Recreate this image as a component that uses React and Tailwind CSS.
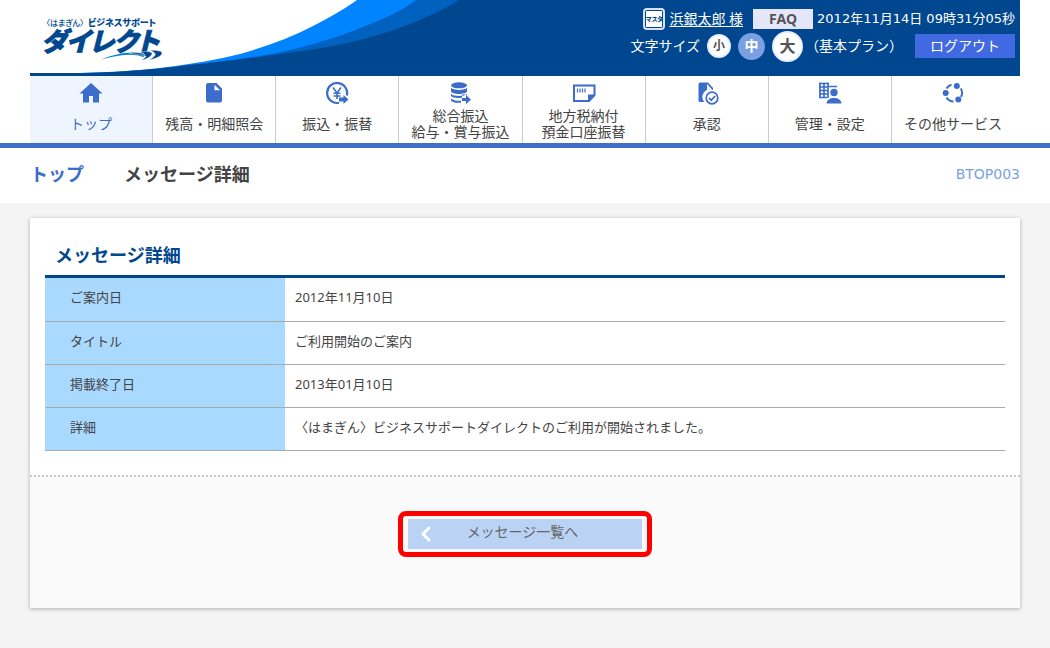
import { ChevronLeft } from 'lucide-react';

const SANS = 'font-["Noto_Sans","Noto_Sans_CJK_JP",sans-serif]';
const TIGHT = 'font-["Liberation_Sans","Noto_Sans_CJK_JP",sans-serif]';

function HomeIcon() {
  return (
    <svg viewBox="0 0 24 24" className="h-6 w-6" fill="currentColor" aria-hidden="true">
      <path d="M12 2 0.5 12.5H4V21.5h6v-6.5h4v6.5h6v-9h3.5z" />
    </svg>
  );
}

function FileIcon() {
  return (
    <svg viewBox="0 0 24 24" className="h-6 w-6" fill="currentColor" aria-hidden="true">
      <path d="M6 2h8.5L20 7.5V19.5a2 2 0 0 1-2 2H6a2 2 0 0 1-2-2V4a2 2 0 0 1 2-2zm6.500 1.700V9.200H18z" />
    </svg>
  );
}

function YenIcon() {
  return (
    <svg viewBox="0 0 24 24" className="h-6 w-6" fill="none" stroke="currentColor" aria-hidden="true">
      <path d="M21.800 14.500A10 10 0 1 0 14 21.800" strokeWidth="2.200" />
      <path d="M8 6.500l4 5.500 4-5.500M12 12v6M8.500 12.200h7M8.500 15h7" strokeWidth="1.600" />
      <path d="M14 16.500h4.500v-2.500l5 4.500-5 4.500v-2.500H14z" fill="currentColor" stroke="none" />
    </svg>
  );
}

function CoinsIcon() {
  return (
    <svg viewBox="0 0 24 24" className="h-6 w-6" fill="currentColor" aria-hidden="true">
      <ellipse cx="11" cy="4.300" rx="8" ry="3" />
      <path d="M3 6.800c2 2.800 14 2.800 16 0v3.700c-1 3.300-15 3.300-16 0z" />
      <path d="M3 12.700c2 3 14 3 16 0v1.200l-1-.4h-4v3.200c-4 .6-10.500 0-11-2z" />
      <path d="M3 17.500c2 2 6 2.500 10 2.200v2c-5 .6-9.500-.5-10-2.400z" />
      <path d="M14 17h4v-3l5 4.700-5 4.300v-3h-4z" />
    </svg>
  );
}

function SlipIcon() {
  return (
    <svg viewBox="0 0 24 24" className="h-6 w-6" fill="none" stroke="currentColor" aria-hidden="true">
      <path d="M2 4.500h20.500V14l-5.500 6H2z" strokeWidth="2" />
      <path d="M23 13.500h-7V20.500z" fill="currentColor" stroke="none" />
      <path d="M5.500 7.500v4M8 7.500v4M10.500 7.500v4M13 7.500v4" strokeWidth="1.200" />
    </svg>
  );
}

function ApproveIcon() {
  return (
    <svg viewBox="0 0 24 24" className="h-6 w-6" fill="none" stroke="currentColor" aria-hidden="true">
      <path d="M5.500 1.500H13l5 5.500V9a7.500 7.500 0 0 0-8.500 12H5a1.500 1.500 0 0 1-1.500-1.500V3a1.500 1.500 0 0 1 1.500-1.500zm6.500 1.500v5.500h5z" fill="currentColor" stroke="none" />
      <circle cx="17" cy="17" r="5.800" strokeWidth="1.700" />
      <path d="M14 17l2.200 2.200 4-4.200" strokeWidth="1.700" />
    </svg>
  );
}

function OfficeIcon() {
  return (
    <svg viewBox="0 0 24 24" className="h-6 w-6" fill="none" stroke="currentColor" aria-hidden="true">
      <path d="M2 1.500v15.500M6 1.500v15.500M10 1.500v15.500M1 2.500h10M1 6h9M1 9.500h9M1 13h9M1 16.500h8M11 5.500h8" strokeWidth="1.700" />
      <circle cx="16" cy="11.500" r="3.700" fill="currentColor" stroke="none" />
      <path d="M8.500 22.500c0-7.500 15-7.500 15 0z" fill="currentColor" stroke="none" />
    </svg>
  );
}

function ServicesIcon() {
  return (
    <svg viewBox="0 0 24 24" className="h-6 w-6" fill="none" stroke="currentColor" aria-hidden="true">
      <path d="M5.500 7.500a8.500 8.500 0 0 1 5-3.800M19.800 7.500a8.500 8.500 0 0 1 .2 8.500M12.500 20.500a8.500 8.500 0 0 1-7-4" strokeWidth="2" />
      <g fill="currentColor" stroke="none">
        <circle cx="4.700" cy="12" r="3" />
        <circle cx="15.800" cy="5" r="3" />
        <circle cx="17.300" cy="18.500" r="3" />
      </g>
    </svg>
  );
}

const NAV_ITEMS = [
  { lines: ['トップ'], Icon: HomeIcon, active: true },
  { lines: ['残高・明細照会'], Icon: FileIcon },
  { lines: ['振込・振替'], Icon: YenIcon },
  { lines: ['総合振込', '給与・賞与振込'], Icon: CoinsIcon },
  { lines: ['地方税納付', '預金口座振替'], Icon: SlipIcon },
  { lines: ['承認'], Icon: ApproveIcon },
  { lines: ['管理・設定'], Icon: OfficeIcon },
  { lines: ['その他サービス'], Icon: ServicesIcon },
];

const DETAILS = [
  ['ご案内日', '2012年11月10日'],
  ['タイトル', 'ご利用開始のご案内'],
  ['掲載終了日', '2013年01月10日'],
  ['詳細', '〈はまぎん〉ビジネスサポートダイレクトのご利用が開始されました。'],
];

function HeaderWave() {
  return (
    <svg viewBox="0 0 440 76" className="absolute left-0 top-0 h-[76px] w-[440px]" aria-hidden="true">
      <path d="M0 0H440V73H0z" fill="#fff" />
      <path d="M0 73H50C110 72 165 65 210 54 235 47 260 38 283 26 300 17 315 9 327 0H440V76H0z" fill="#0084ff" />
      <path d="M150 66C190 62 220 58 247 53 290 44 320 33 357 17 370 11 380 5 386 0H440V76H150z" fill="#0061bf" />
      <path d="M0 73H50C100 72 125 69 160 65 200 61 220 58 243 55 295 49 340 40 383 23 405 13 417 8 429 0H440V76H0z" fill="#00478f" />
    </svg>
  );
}

function Logo() {
  return (
    <svg viewBox="-6 0 134 50" className={`relative h-[50px] w-[134px] ${TIGHT}`} fill="#00478f">
      <text x="3" y="12" className="text-[8px] font-medium [font-feature-settings:'palt']">〈はまぎん〉</text>
      <text x="45" y="12" className="text-[9px] font-black [font-feature-settings:'palt']">ビジネスサポート</text>
      <text x="-2" y="37" stroke="#00478f" strokeWidth="0.8" className="text-[26px] font-black italic [font-feature-settings:'palt']">ダイレクト</text>
      <path d="M58 45.500C74 39 92 36 103 41L100 43C90 39 76 41 58 45.500z" fill="#0082d2" />
      <path d="M86 39C93 38 98 38.500 102 41L98 37.500C104 37 109 38 109 39.500 109 42 104 45 98 46.500 101 44.500 103 43 103 42 98 41 93 40 86 39zM107 36.500C113 36 119 37 119 39 119 42 113 44.500 106 46 111 43 113 41 112 39.500 111 38 109 37 107 36.500z" stroke="#fff" strokeWidth="0.400" />
    </svg>
  );
}

function Header() {
  return (
    <header className="px-[30px]">
      <div className="relative flex h-[76px] items-start justify-between bg-[#00478f] pr-[5px] text-sm text-white">
        <HeaderWave />
        <a href="#top" className="relative ml-[7px] mt-[14px]">
          <Logo />
        </a>
        <div className="relative mt-2 flex flex-col items-end">
          <div className="flex h-[22px] items-center">
            <span className="mr-1 flex h-[22px] w-[22px] items-center justify-center rounded-[4px] border-2 border-[#d9e2f3] bg-[#00478f] p-px">
              <span className="flex h-full w-full items-center justify-center whitespace-nowrap bg-white text-[6px] font-black leading-none text-[#00478f] [font-feature-settings:'palt']">マスタ</span>
            </span>
            <a href="#user" className="underline underline-offset-2">浜銀太郎 様</a>
            <a href="#faq" className="ml-[10px] w-[60px] bg-[#e6e6fa] text-center font-bold leading-5 text-[#555]">FAQ</a>
            <time className='ml-1 font-["DejaVu_Sans","Noto_Sans_CJK_JP",sans-serif] text-[13px]'>2012年11月14日 09時31分05秒</time>
          </div>
          <div className="flex h-8 items-center">
            <span>文字サイズ</span>
            <button type="button" className="ml-[7px] h-6 w-6 rounded-full border-2 border-[#e6eeff] bg-white text-xs font-bold leading-none text-[#555]">小</button>
            <button type="button" className="ml-[7px] h-[27px] w-[27px] rounded-full bg-[#7b9fe3] text-sm font-bold leading-none">中</button>
            <button type="button" className="ml-[7px] h-[31px] w-[31px] rounded-full border-2 border-[#e6eeff] bg-white text-base font-bold leading-none text-[#555]">大</button>
            <span className="ml-0.5">（基本プラン）</span>
            <button type="button" className="ml-3 h-6 w-[100px] bg-[#4169e1]">ログアウト</button>
          </div>
        </div>
      </div>
    </header>
  );
}

function NavItem({ lines, Icon, active }) {
  return (
    <li className="flex-1 border-r border-[#ccc] last:border-r-0">
      <a
        href="#menu"
        className={`flex h-[67px] flex-col items-center pt-[5px] text-sm leading-4 ${TIGHT} ${active ? 'bg-[#eff5ff] text-[#3c6dcb]' : 'text-[#444]'}`}
      >
        <span className="text-[#3c6dcb]"><Icon /></span>
        <span className="flex flex-1 flex-col items-center justify-center whitespace-nowrap">
          {lines.map((line) => <span key={line}>{line}</span>)}
        </span>
      </a>
    </li>
  );
}

export default function App() {
  return (
    <div className={`min-h-screen bg-[#f4f4f4] text-[#444] ${SANS}`}>
      <div className="bg-white">
        <Header />
        <nav className="border-b-[5px] border-[#3f6fcb] pl-[30px] pr-9">
          <ul className="flex">
            {NAV_ITEMS.map((item) => <NavItem key={item.lines[0]} {...item} />)}
          </ul>
        </nav>
        <div className="flex h-[55px] items-center px-[30px] pb-[3px] text-lg font-bold">
          <a href="#top" className="text-[#3c6dcb]">トップ</a>
          <h1 className="ml-10">メッセージ詳細</h1>
          <span className='ml-auto font-["DejaVu_Sans",sans-serif] text-sm font-normal text-[#7b9fe3]'>BTOP003</span>
        </div>
      </div>

      <main className="mx-[30px] mt-[15px] bg-white shadow-[0_1px_4px_rgba(0,0,0,0.3)]">
        <section className="px-[15px] pb-6 pt-[21px]">
          <h2 className="border-b-[3px] border-[#00478f] px-[10px] pb-1 text-lg font-bold leading-8 text-[#00478f]">メッセージ詳細</h2>
          <table className="w-full text-[13px] leading-5">
            <tbody>
              {DETAILS.map(([label, value]) => (
                <tr key={label} className="h-[43px] border-b border-[#aaa]">
                  <th scope="row" className="w-[240px] bg-[#aad9ff] px-[25px] pb-1 text-left font-normal">{label}</th>
                  <td className="px-[10px] pb-1">{value}</td>
                </tr>
              ))}
            </tbody>
          </table>
        </section>
        <div className="flex justify-center border-t-2 border-dotted border-[#ccc] bg-[#fafafa] pb-[51px] pt-[34px]">
          <div className="rounded-lg border-[5px] border-[#f00] px-[5px] py-[3px]">
            <button type="button" className="relative block h-[30px] w-[234px] bg-[#bad3f5] pb-1 pr-[5px] text-sm text-[#666]">
              <ChevronLeft className="absolute left-1.5 top-[3px] h-6 w-6 text-white" strokeWidth={3} />
              メッセージ一覧へ
            </button>
          </div>
        </div>
      </main>
    </div>
  );
}
